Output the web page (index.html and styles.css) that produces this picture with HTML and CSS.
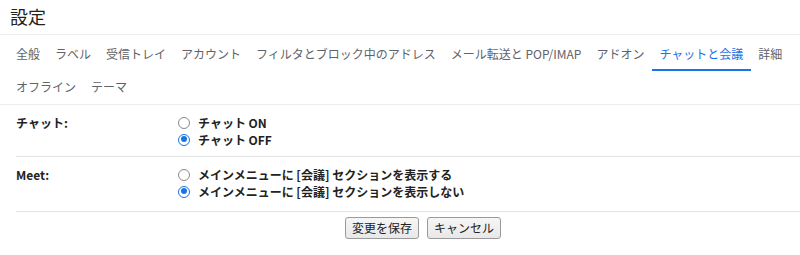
FILE: index.html
```html
<!DOCTYPE html>
<html lang="ja">
<head>
<meta charset="utf-8">
<title>設定</title>
<link rel="stylesheet" href="styles.css">
</head>
<body>
<div class="page">
  <h1 class="title">設定</h1>
  <nav class="tabs">
    <div class="tab-row">
      <span class="tab">全般</span>
      <span class="tab">ラベル</span>
      <span class="tab">受信トレイ</span>
      <span class="tab">アカウント</span>
      <span class="tab">フィルタとブロック中のアドレス</span>
      <span class="tab">メール転送と POP/IMAP</span>
      <span class="tab">アドオン</span>
      <span class="tab active">チャットと会議</span>
      <span class="tab">詳細</span>
    </div>
    <div class="tab-row">
      <span class="tab">オフライン</span>
      <span class="tab">テーマ</span>
    </div>
  </nav>
  <div class="section first">
    <div class="label">チャット:</div>
    <div class="options">
      <label class="option"><span class="radio"></span>チャット ON</label>
      <label class="option"><span class="radio checked"></span>チャット OFF</label>
    </div>
  </div>
  <div class="section second">
    <div class="label">Meet:</div>
    <div class="options">
      <label class="option"><span class="radio"></span>メインメニューに [会議] セクションを表示する</label>
      <label class="option"><span class="radio checked"></span>メインメニューに [会議] セクションを表示しない</label>
    </div>
  </div>
  <div class="actions">
    <button class="btn">変更を保存</button>
    <button class="btn">キャンセル</button>
  </div>
</div>
</body>
</html>
```
FILE: styles.css
```css
html, body {
  margin: 0;
  padding: 0;
  background: #fff;
}
body {
  font-family: "Noto Sans CJK JP", "Noto Sans", sans-serif;
  color: #222;
}
.page {
  width: 800px;
}
.title {
  margin: 0;
  height: 34px;
  line-height: 32px;
  padding-left: 10px;
  font-size: 18px;
  font-weight: normal;
  color: #222;
  border-bottom: 1px solid #ececec;
}
.tabs {
  padding: 2px 0 0 8.5px;
  border-bottom: 1px solid #ececec;
}
.tab-row {
  display: flex;
  height: 34px;
}
.tab-row + .tab-row {
  height: 33px;
}
.tab {
  display: flex;
  align-items: center;
  padding: 0 7.5px;
  font-size: 12px;
  color: #5f6368;
  white-space: nowrap;
  box-sizing: border-box;
  border-bottom: 2px solid transparent;
}
.tab.active {
  color: #1a73e8;
  border-bottom-color: #1a73e8;
}
.section {
  display: grid;
  grid-template-columns: 161px 1fr;
  margin-left: 16px;
  font-size: 12px;
  font-weight: bold;
  color: #222;
}
.section.first {
  padding: 9px 0 8px;
  border-bottom: 1px solid #e3e3e3;
}
.section.second {
  padding: 9px 0 11px;
  border-bottom: 1px solid #e3e3e3;
}
.label {
  line-height: 17px;
}
.options {
  display: flex;
  flex-direction: column;
}
.option {
  display: flex;
  align-items: center;
  height: 17px;
  line-height: 17px;
}
.radio {
  width: 12px;
  height: 12px;
  box-sizing: border-box;
  border: 1px solid #8a8a8a;
  border-radius: 50%;
  margin: 0 8px 0 1px;
  background: #fff;
  position: relative;
}
.radio.checked {
  border: 1.5px solid #1a73e8;
}
.radio.checked::after {
  content: "";
  position: absolute;
  left: 1.5px;
  top: 1.5px;
  width: 6px;
  height: 6px;
  border-radius: 50%;
  background: #1a73e8;
}
.actions {
  display: flex;
  gap: 8px;
  padding: 5px 0 0 345px;
}
.btn {
  height: 22px;
  padding: 0 6px;
  font-family: "Noto Sans CJK JP", "Noto Sans", sans-serif;
  font-size: 12px;
  color: #222;
  background: linear-gradient(#f6f6f6, #e8e8e8);
  border: 1px solid #9a9a9a;
  border-radius: 3px;
  line-height: 20px;
}
```
